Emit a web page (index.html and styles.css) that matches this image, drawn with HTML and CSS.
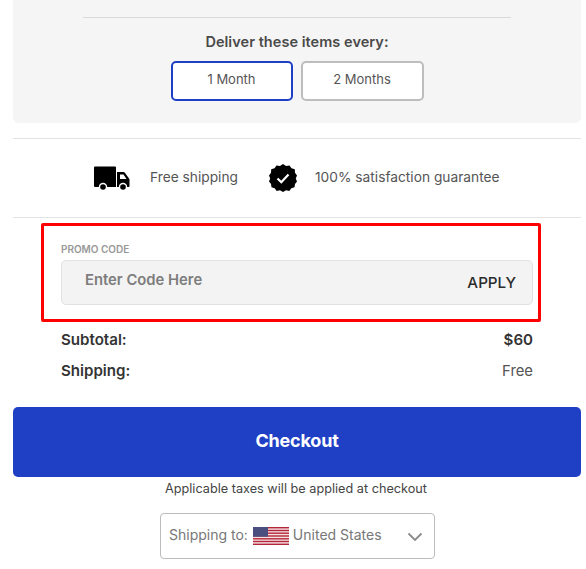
FILE: index.html
```html
<!DOCTYPE html>
<html lang="en">
<head>
<meta charset="utf-8">
<title>Cart</title>
<link rel="stylesheet" href="styles.css">
</head>
<body>
<main class="cart">
  <section class="panel">
    <div class="panel-rule"></div>
    <h2 class="deliver-title">Deliver these items every:</h2>
    <div class="freq">
      <button class="freq-btn freq-one is-active">1 Month</button>
      <button class="freq-btn freq-two">2 Months</button>
    </div>
  </section>

  <section class="perks">
    <div class="perk perk-ship">
      <svg class="truck" width="36" height="25" viewBox="0 0 36 25" aria-hidden="true">
        <path d="M0 1.500a1 1 0 0 1 1-1h20a1 1 0 0 1 1 1V21H1a1 1 0 0 1-1-1z" fill="#000"/>
        <path d="M23 6h6.500a1.500 1.500 0 0 1 1.200.6L35 12.500a2 2 0 0 1 .5 1.300V20a1 1 0 0 1-1 1H23z" fill="#000"/>
        <path d="M26 8.500h3.500l3 4.500H26z" fill="#fff"/>
        <circle cx="9" cy="21" r="4.200" fill="#fff"/>
        <circle cx="9" cy="21" r="2.800" fill="#000"/>
        <circle cx="29" cy="21" r="4.200" fill="#fff"/>
        <circle cx="29" cy="21" r="2.800" fill="#000"/>
      </svg>
      <span class="perk-text">Free shipping</span>
    </div>
    <div class="perk perk-guar">
      <svg class="badge" width="28" height="28" viewBox="0 0 28 28" aria-hidden="true">
        <polygon fill="#000" points="14,0 17,2 20.500,1.400 22.500,4.300 25.800,5.300 26,8.800 28,11.500 26.800,14.500 28,17.500 26,20 25.500,23.300 22.300,24.300 20.300,27 17,26.300 14,28 11,26.300 7.700,27 5.700,24.300 2.500,23.300 2,20 0,17.500 1.200,14.500 0,11.500 2,8.800 2.200,5.300 5.500,4.300 7.500,1.400 11,2"/>
        <path d="M8.500 14.500l3.800 3.700 7.200-7.700" fill="none" stroke="#fff" stroke-width="2.200"/>
      </svg>
      <span class="perk-text">100% satisfaction guarantee</span>
    </div>
  </section>

  <section class="promo-box">
    <label class="promo-label" for="promo">PROMO CODE</label>
    <div class="promo-field">
      <span class="promo-placeholder" id="promo">Enter Code Here</span>
      <span class="promo-apply">APPLY</span>
    </div>
  </section>

  <section class="totals">
    <div class="row"><span class="row-name">Subtotal:</span><span class="row-strong">$60</span></div>
    <div class="row"><span class="row-name">Shipping:</span><span class="row-light">Free</span></div>
  </section>

  <button class="checkout">Checkout</button>
  <p class="taxes">Applicable taxes will be applied at checkout</p>

  <div class="ship-select">
    <span class="ship-text">Shipping to:</span>
    <svg class="flag" width="36" height="18" viewBox="0 0 36 18" aria-hidden="true">
      <rect width="36" height="18" fill="#f4e4e4"/>
      <g fill="#b5263a">
        <rect y="0" width="36" height="1.400"/>
        <rect y="2.800" width="36" height="1.400"/>
        <rect y="5.500" width="36" height="1.400"/>
        <rect y="8.300" width="36" height="1.400"/>
        <rect y="11.100" width="36" height="1.400"/>
        <rect y="13.800" width="36" height="1.400"/>
        <rect y="16.600" width="36" height="1.400"/>
      </g>
      <rect width="15" height="9.700" fill="#4a4f80"/>
    </svg>
    <span class="ship-text">United States</span>
    <svg class="chev" width="16" height="10" viewBox="0 0 16 10" aria-hidden="true">
      <path d="M1.500 1.500L8 8l6.500-6.500" fill="none" stroke="#8a8a8a" stroke-width="1.800"/>
    </svg>
  </div>
</main>
</body>
</html>
```

FILE: styles.css
```css
* { box-sizing: border-box; }
html, body { margin: 0; padding: 0; background: #fff; }
body {
  font-family: "Inter", "Liberation Sans", sans-serif;
  color: #333;
  width: 586px;
  height: 569px;
  overflow: hidden;
}
.cart { margin-left: 13px; width: 568px; display: flex; flex-direction: column; }

.panel {
  background: #f5f5f5;
  height: 123px;
  border-radius: 0 0 6px 6px;
  display: flex;
  flex-direction: column;
  align-items: center;
  padding-top: 17px;
}
.panel-rule { width: 428px; height: 1px; background: #d9d9d9; }
.deliver-title {
  margin: 15px 0 0;
  font-size: 14.500px;
  line-height: 17px;
  font-weight: 600;
  color: #4a4a4a;
  letter-spacing: 0.05px;
}
.freq { display: flex; gap: 8px; margin-top: 11px; }
.freq-btn {
  height: 40px;
  background: #fff;
  border-radius: 5px;
  font: inherit;
  font-size: 13px;
  color: #555;
  padding: 0 0 5px;
}
.freq-one { width: 122px; border: 2px solid #1f40c4; }
.freq-two { width: 123px; border: 2px solid #bdbdbd; }

.perks {
  margin-top: 15px;
  height: 80px;
  border-top: 1px solid #e3e3e3;
  border-bottom: 1px solid #e3e3e3;
  display: flex;
  align-items: center;
  padding-left: 81px;
  font-size: 13.750px;
  color: #555;
}
.perk { display: flex; align-items: center; }
.perk-text { margin-top: -3px; }
.truck { margin-right: 20px; }
.perk-guar { margin-left: 31px; }
.badge { margin-right: 18px; }

.promo-box {
  margin: 5px 0 0 28px;
  width: 500px;
  height: 99px;
  border: 3px solid #ff0000;
  border-radius: 2px;
  padding: 17px 5px 0 17px;
  display: flex;
  flex-direction: column;
}
.promo-label { font-size: 10px; line-height: 12px; color: #999; font-weight: 600; letter-spacing: -0.02px; }
.promo-field {
  margin-top: 5px;
  height: 45px;
  background: #f3f3f3;
  border: 1px solid #e2e2e2;
  border-radius: 5px;
  display: flex;
  align-items: center;
  justify-content: space-between;
  padding: 0 16px 0 23px;
}
.promo-placeholder { font-size: 14.800px; font-weight: 600; color: #7d7d7d; margin-top: -5px; }
.promo-apply { font-size: 15.200px; font-weight: 500; color: #2b2b2b; margin-top: 0; }

.totals { margin: 2px 0 0 48px; width: 472px; display: flex; flex-direction: column; }
.row { display: flex; justify-content: space-between; align-items: center; height: 31px; font-size: 15.100px; }
.row-name, .row-strong { font-weight: 600; color: #333; }
.row-light { color: #555; font-size: 14.800px; }

.checkout {
  margin-top: 21px;
  height: 70px;
  width: 568px;
  background: #1f40c4;
  color: #fff;
  border: 0;
  border-radius: 5px;
  font: inherit;
  font-size: 18px;
  font-weight: 700;
  letter-spacing: -0.2px;
  padding: 0 0 4px;
}
.taxes { margin: 4px 0 0; height: 16px; text-align: center; font-size: 12.700px; line-height: 16px; color: #444; padding-right: 2px; }

.ship-select {
  margin: 16px 0 0 147px;
  width: 275px;
  height: 46px;
  border: 1px solid #bcbcbc;
  border-radius: 4px;
  display: flex;
  align-items: center;
  padding-left: 8px;
  font-size: 14px;
  color: #777;
}
.ship-text { margin-top: -3px; }
.flag { margin: 0 4px 0 5px; }
.chev { margin-left: auto; margin-right: 11px; margin-top: 2px; }
```
